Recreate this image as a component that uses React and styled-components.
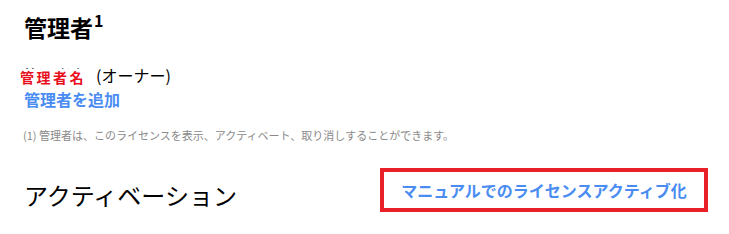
import React from 'react'
import styled, { createGlobalStyle } from 'styled-components'

const GlobalStyle = createGlobalStyle`
  html, body {
    margin: 0;
    padding: 0;
    background: #fff;
  }
  body {
    font-family: 'Noto Sans CJK JP', 'Noto Sans', sans-serif;
    color: #000;
  }
`

const Page = styled.div`
  width: 729px;
  height: 234px;
  box-sizing: border-box;
  padding: 11px 21px 0 24px;
  overflow: hidden;
`

const Title = styled.h2`
  margin: 0;
  font-size: 23px;
  font-weight: 700;
  line-height: 32px;
  sup {
    font-size: 16px;
    font-weight: 700;
    line-height: 0;
    position: relative;
    top: -1px;
    margin-left: 1px;
  }
`

const OwnerRow = styled.div`
  margin-top: 21px;
  font-size: 16px;
  line-height: 20px;
  display: flex;
  align-items: center;
  gap: 8px;
`

const NameWrap = styled.span`
  position: relative;
  display: inline-block;
`

const HiddenName = styled.span`
  color: #000;
  font-size: 15px;
  letter-spacing: 1px;
`

const RedactLabel = styled.span`
  position: absolute;
  left: -4px;
  top: 5px;
  background: #fff;
  color: #e8101c;
  font-size: 14px;
  font-weight: 700;
  letter-spacing: 2.5px;
  line-height: 16px;
  white-space: nowrap;
`

const Role = styled.span`
  color: #000;
`

const AddLink = styled.a`
  display: block;
  margin-top: 4px;
  color: #4a8cf2;
  font-size: 16px;
  font-weight: 700;
  line-height: 20px;
  text-decoration: none;
`

const Note = styled.p`
  margin: 19px 0 0 -1px;
  color: #8a8a8a;
  font-size: 11px;
  line-height: 14px;
`

const ActivationRow = styled.div`
  margin-top: 26px;
  display: flex;
  justify-content: space-between;
  align-items: center;
`

const SubTitle = styled.h2`
  margin: 10px 0 0;
  font-size: 24px;
  font-weight: 400;
  line-height: 32px;
`

const ManualBox = styled.div`
  border: 4px solid #e8202a;
  width: 328px;
  height: 44px;
  box-sizing: border-box;
  display: flex;
  align-items: center;
  justify-content: center;
`

const ManualLink = styled.a`
  color: #4a8cf2;
  font-size: 16px;
  font-weight: 700;
  text-decoration: none;
`

export default function App() {
  return (
    <>
      <GlobalStyle />
      <Page>
        <Title>
          管理者<sup>1</sup>
        </Title>
        <OwnerRow>
          <NameWrap>
            <HiddenName>管理者名</HiddenName>
            <RedactLabel>管理者名</RedactLabel>
          </NameWrap>
          <Role>(オーナー)</Role>
        </OwnerRow>
        <AddLink href="#">管理者を追加</AddLink>
        <Note>(1) 管理者は、このライセンスを表示、アクティベート、取り消しすることができます。</Note>
        <ActivationRow>
          <SubTitle>アクティベーション</SubTitle>
          <ManualBox>
            <ManualLink href="#">マニュアルでのライセンスアクティブ化</ManualLink>
          </ManualBox>
        </ActivationRow>
      </Page>
    </>
  )
}
